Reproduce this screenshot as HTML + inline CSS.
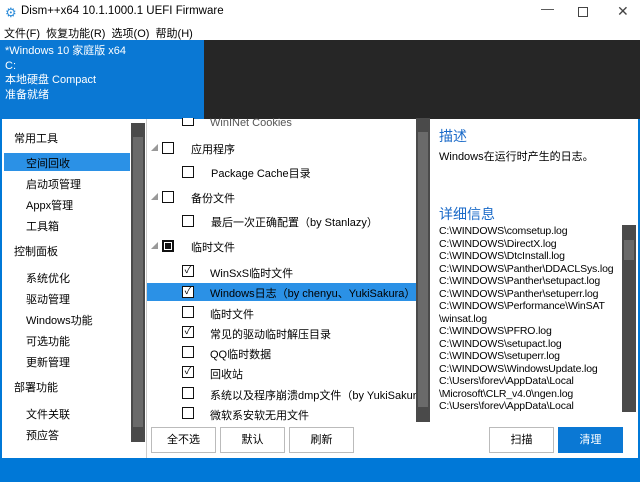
<!DOCTYPE html>
<html><head><meta charset="utf-8"><style>
*{margin:0;padding:0;box-sizing:border-box}
body{width:640px;height:482px;overflow:hidden;background:#0078d7;font-family:"Liberation Sans","Noto Sans CJK SC",sans-serif;font-size:11px;color:#000;position:relative}
.a{position:absolute;white-space:nowrap}
.cb{position:absolute;width:12px;height:12px;border:1.5px solid #111;background:#fff}
.sb{position:absolute;background:#4a4a4a}
.th{position:absolute;background:#6a6a6a}
.btn{position:absolute;height:26px;border:1px solid #bbb;background:#fff;text-align:center;line-height:24px;font-size:11px}
</style></head><body>
<div class="a" style="left:0;top:0;width:640px;height:40px;background:#fff"></div>
<div class="a" style="left:5px;top:5px;font-size:13px;color:#2a8ad8">⚙</div>
<div class="a" style="left:21px;top:5px;font-size:11.5px">Dism++x64 10.1.1000.1 UEFI Firmware</div>
<div class="a" style="left:541px;top:1px;font-size:13px;color:#444">—</div>
<div class="a" style="left:578px;top:7px;width:10px;height:10px;border:1px solid #444"></div>
<div class="a" style="left:617px;top:3px;font-size:14px;color:#444">✕</div>
<div class="a" style="left:4px;top:25px;font-size:11px">文件(F) &nbsp;恢复功能(R) &nbsp;选项(O) &nbsp;帮助(H)</div>
<div class="a" style="left:0;top:40px;width:204px;height:79px;background:#0a78d4"></div>
<div class="a" style="left:204px;top:40px;width:436px;height:79px;background:#262626"></div>
<div class="a" style="left:5px;top:44px;color:#fff;line-height:14.5px;font-size:11px">*Windows 10 家庭版 x64<br>C:<br>本地硬盘 Compact<br>准备就绪</div>
<!-- body -->
<div class="a" style="left:2px;top:119px;width:636px;height:339px;background:#fff"></div>
<div class="a" style="left:146px;top:119px;width:1px;height:339px;background:#ccc"></div>
<!-- left panel -->
<div class="a" style="left:4px;top:153px;width:126px;height:18px;background:#2b91e6"></div>
<div class="a" style="left:14px;top:129px;line-height:21px">常用工具</div>
<div class="a" style="left:26px;top:154px;line-height:21px">空间回收<br>启动项管理<br>Appx管理<br>工具箱</div>
<div class="a" style="left:14px;top:243px">控制面板</div>
<div class="a" style="left:26px;top:269px;line-height:21px">系统优化<br>驱动管理<br>Windows功能<br>可选功能<br>更新管理</div>
<div class="a" style="left:14px;top:379px">部署功能</div>
<div class="a" style="left:26px;top:405px;line-height:21px">文件关联<br>预应答</div>
<div class="sb" style="left:131px;top:123px;width:14px;height:319px"></div>
<div class="th" style="left:133px;top:137px;width:10px;height:290px"></div>
<!-- middle -->
<div class="a" style="left:147px;top:283px;width:270px;height:18px;background:#2b91e6"></div>
<div class="cb" style="left:182px;top:118px;height:8px;border-top:none"></div>
<div class="a" style="left:210px;top:117px;color:#555">WinINet Cookies</div>
<div class="a" style="left:151px;top:143px;color:#999;font-size:7px">◢</div>
<div class="cb" style="left:162px;top:142px"></div><div class="a" style="left:191px;top:141px">应用程序</div>
<div class="cb" style="left:182px;top:166px"></div><div class="a" style="left:211px;top:165px">Package Cache目录</div>
<div class="a" style="left:151px;top:192px;color:#999;font-size:7px">◢</div>
<div class="cb" style="left:162px;top:191px"></div><div class="a" style="left:191px;top:190px">备份文件</div>
<div class="cb" style="left:182px;top:215px"></div><div class="a" style="left:211px;top:214px">最后一次正确配置（by Stanlazy）</div>
<div class="a" style="left:151px;top:241px;color:#999;font-size:7px">◢</div>
<div class="cb" style="left:162px;top:240px;border-width:2px;background:#fff"><div style="margin:1px;width:6px;height:6px;background:#111"></div></div><div class="a" style="left:191px;top:239px">临时文件</div>
<div class="a" style="left:210px;top:264px;line-height:20.3px">WinSxS临时文件<br>Windows日志（by chenyu、YukiSakura）<br>临时文件<br>常见的驱动临时解压目录<br>QQ临时数据<br>回收站<br>系统以及程序崩溃dmp文件（by YukiSakura）<br>微软系安软无用文件</div>
<div class="cb" style="left:182px;top:265px;font-size:10px;line-height:9px;text-align:center">✓</div>
<div class="cb" style="left:182px;top:286px;font-size:10px;line-height:9px;text-align:center">✓</div>
<div class="cb" style="left:182px;top:306px"></div>
<div class="cb" style="left:182px;top:326px;font-size:10px;line-height:9px;text-align:center">✓</div>
<div class="cb" style="left:182px;top:346px"></div>
<div class="cb" style="left:182px;top:366px;font-size:10px;line-height:9px;text-align:center">✓</div>
<div class="cb" style="left:182px;top:387px"></div>
<div class="cb" style="left:182px;top:407px"></div>
<div class="sb" style="left:416px;top:118px;width:14px;height:304px"></div>
<div class="th" style="left:418px;top:132px;width:10px;height:275px"></div>
<div class="btn" style="left:151px;top:427px;width:65px">全不选</div>
<div class="btn" style="left:220px;top:427px;width:65px">默认</div>
<div class="btn" style="left:289px;top:427px;width:65px">刷新</div>
<div class="btn" style="left:489px;top:427px;width:65px">扫描</div>
<div class="btn" style="left:558px;top:427px;width:65px;background:#0a78d4;border-color:#0a78d4;color:#fff">清理</div>
<!-- right -->
<div class="a" style="left:439px;top:126px;font-size:14px;color:#1a6ac8">描述</div>
<div class="a" style="left:439px;top:148px">Windows在运行时产生的日志。</div>
<div class="a" style="left:439px;top:204px;font-size:14px;color:#1a6ac8">详细信息</div>
<div class="a" style="left:439px;top:225px;line-height:12.5px;font-size:10.5px;letter-spacing:-0.15px;height:188px;width:182px;overflow:hidden">C:\WINDOWS\comsetup.log<br>C:\WINDOWS\DirectX.log<br>C:\WINDOWS\DtcInstall.log<br>C:\WINDOWS\Panther\DDACLSys.log<br>C:\WINDOWS\Panther\setupact.log<br>C:\WINDOWS\Panther\setuperr.log<br>C:\WINDOWS\Performance\WinSAT<br>\winsat.log<br>C:\WINDOWS\PFRO.log<br>C:\WINDOWS\setupact.log<br>C:\WINDOWS\setuperr.log<br>C:\WINDOWS\WindowsUpdate.log<br>C:\Users\forev\AppData\Local<br>\Microsoft\CLR_v4.0\ngen.log<br>C:\Users\forev\AppData\Local</div>
<div class="sb" style="left:622px;top:225px;width:14px;height:187px"></div>
<div class="th" style="left:624px;top:240px;width:10px;height:20px"></div>
</body></html>
